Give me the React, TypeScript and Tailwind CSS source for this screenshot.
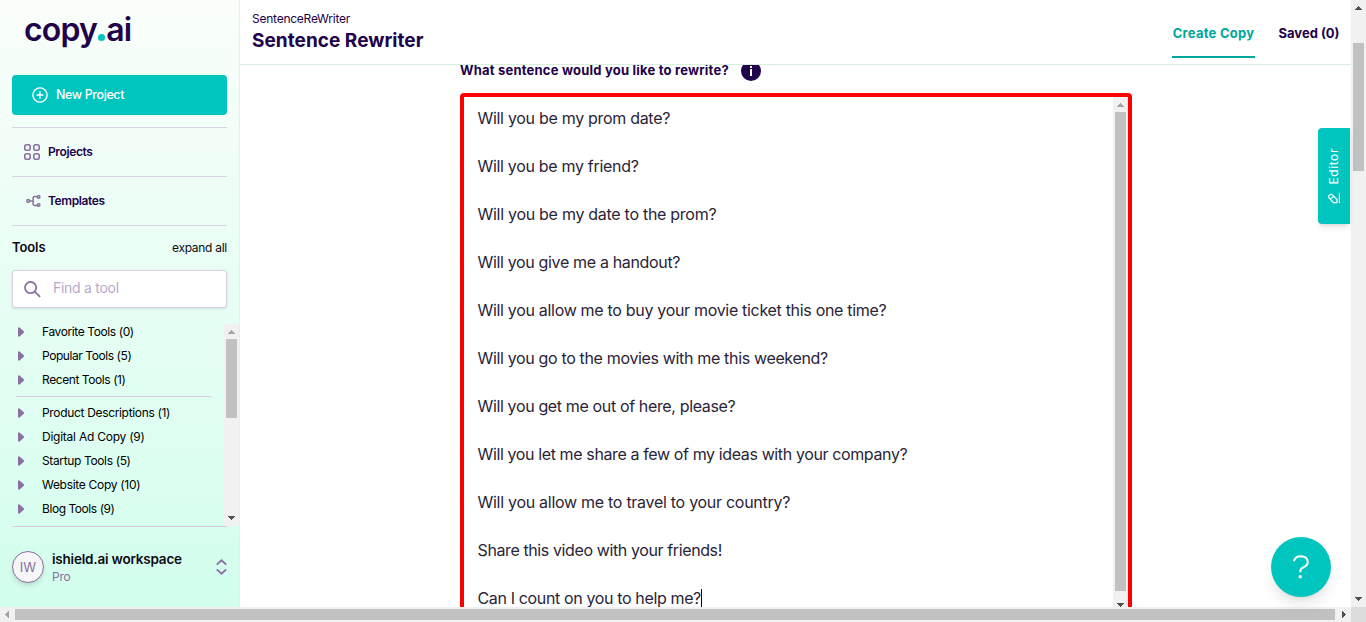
import React from "react";

const sentences: [string, string][] = [
  ["Will you be my prom date?", "tracking-[-0.3px]"],
  ["Will you be my friend?", "tracking-[-0.31px]"],
  ["Will you be my date to the prom?", "tracking-[-0.28px]"],
  ["Will you give me a handout?", "tracking-[-0.34px]"],
  ["Will you allow me to buy your movie ticket this one time?", "tracking-[-0.31px]"],
  ["Will you go to the movies with me this weekend?", "tracking-[-0.34px]"],
  ["Will you get me out of here, please?", "tracking-[-0.36px]"],
  ["Will you let me share a few of my ideas with your company?", "tracking-[-0.38px]"],
  ["Will you allow me to travel to your country?", "tracking-[-0.28px]"],
  ["Share this video with your friends!", "tracking-[-0.39px]"],
  ["Can I count on you to help me?", "tracking-[-0.36px]"],
];

const topTools: [string, string][] = [
  ["Favorite Tools (0)", "tracking-[-0.4px]"],
  ["Popular Tools (5)", "tracking-[-0.43px]"],
  ["Recent Tools (1)", "tracking-[-0.42px]"],
];

const allTools: [string, string][] = [
  ["Product Descriptions (1)", "tracking-[-0.33px]"],
  ["Digital Ad Copy (9)", "tracking-[-0.24px]"],
  ["Startup Tools (5)", "tracking-[-0.36px]"],
  ["Website Copy (10)", "tracking-[-0.3px]"],
  ["Blog Tools (9)", "tracking-[-0.44px]"],
];

function Arrow({ dir, color = "#505050" }: { dir: "up" | "down" | "left" | "right"; color?: string }) {
  const paths = {
    up: "M0 4h7L3.5 0z",
    down: "M0 0h7L3.5 4z",
    left: "M4 0v7L0 3.5z",
    right: "M0 0v7l4-3.5z",
  };
  const vertical = dir === "up" || dir === "down";
  return (
    <svg width={vertical ? 7 : 4} height={vertical ? 4 : 7} className="shrink-0" shapeRendering="crispEdges">
      <path d={paths[dir]} fill={color} />
    </svg>
  );
}

function ToolRow({ label, tracking }: { label: string; tracking: string }) {
  return (
    <li className="flex h-6 items-center pl-[6px]">
      <svg width="6" height="10" className="shrink-0">
        <path d="M0 .5h1.6L6 4.4v1.2L1.6 9.5H0z" fill="#8a6fa0" />
      </svg>
      <span className={"ml-[18px] whitespace-nowrap text-[12px] " + tracking}>{label}</span>
    </li>
  );
}

function Sidebar() {
  return (
    <aside className="flex w-60 shrink-0 flex-col border-r border-[#dff3ec] bg-linear-to-b from-[#fafefb] to-[#d2feed] pl-3">
      <div className="flex h-[75px] items-start pl-3 pt-[9px] text-[32px] font-semibold leading-[42px] tracking-[-0.8px] text-[#21024a]">
        <span>copy</span>
        <span className="ml-[1px] mr-[1px] mt-[25px] h-[7px] w-[7px] rounded-full bg-[#00c5bf]" />
        <span>ai</span>
      </div>
      <button className="flex h-10 w-[215px] items-center rounded bg-[#00c5bf] pl-5 text-[12.5px] font-medium text-white">
        <svg width="16" height="16" viewBox="0 0 16 16" fill="none" stroke="#fff" strokeWidth="1.4">
          <circle cx="8" cy="8" r="7.1" />
          <path d="M8 4.5v7M4.5 8h7" />
        </svg>
        <span className="ml-2 pt-px tracking-[-0.4px]">New Project</span>
      </button>
      <nav className="mt-3 w-[215px] border-t border-[#dcd2e6] text-[12px] font-semibold tracking-[-0.38px] text-[#21024a]">
        <a className="flex h-[49px] items-center border-b border-[#dcd2e6] pl-3">
          <svg width="16" height="16" viewBox="0 0 16 16" fill="none" stroke="#8a6fa0" strokeWidth="1.6">
            <rect x=".8" y=".8" width="5.4" height="5.4" rx="1.7" />
            <rect x="9.8" y=".8" width="5.4" height="5.4" rx="1.7" />
            <rect x=".8" y="9.8" width="5.4" height="5.4" rx="1.7" />
            <rect x="9.8" y="9.8" width="5.4" height="5.4" rx="1.7" />
          </svg>
          <span className="ml-2">Projects</span>
        </a>
        <a className="flex h-[49px] items-center border-b border-[#dcd2e6] pl-[14px]">
          <svg width="15" height="12" viewBox="0 0 15 12" fill="none" stroke="#8a6fa0" strokeWidth="1.5">
            <circle cx="2.2" cy="6" r="1.4" />
            <circle cx="12.6" cy="2" r="1.3" />
            <circle cx="12.6" cy="10" r="1.3" />
            <path d="M3.7 6H7M11.2 1.6H8.6Q7.1 1.6 7.1 3v6q0 1.4 1.5 1.4h2.6" />
          </svg>
          <span className="ml-[7px]">Templates</span>
        </a>
      </nav>
      <div className="flex h-11 w-[215px] items-center justify-between text-[#0c0a14]">
        <span className="text-[13px] font-semibold tracking-[-0.1px]">Tools</span>
        <span className="text-[12px] tracking-[-0.28px]">expand all</span>
      </div>
      <div className="flex h-[38px] w-[215px] shrink-0 items-center rounded-[3px] border border-[#dccfe8] bg-white pl-[11px] shadow-sm">
        <svg width="17" height="17" viewBox="0 0 17 17" fill="none" stroke="#8a6fa0" strokeWidth="1.8">
          <circle cx="6.6" cy="6.6" r="5.6" />
          <path d="M10.7 10.7l5.4 5.2" />
        </svg>
        <span className="ml-3 pb-[3px] text-[14px] tracking-[-0.28px] text-[#b9a9cb]">Find a tool</span>
      </div>
      <div className="mt-4 flex h-[202px] shrink-0">
        <div className="w-[212px] overflow-hidden text-black">
          <ul className="-mt-1">
            {topTools.map(([t, s]) => (
              <ToolRow key={t} label={t} tracking={s} />
            ))}
          </ul>
          <hr className="ml-1 mt-1 mb-1 w-[196px] border-[#dcc9e6]" />
          <ul>
            {allTools.map(([t, s]) => (
              <ToolRow key={t} label={t} tracking={s} />
            ))}
          </ul>
        </div>
        <div className="flex w-[15px] flex-col items-center bg-[#f1f1f1]">
          <div className="flex h-[15px] items-center">
            <Arrow dir="up" color="#a3a3a3" />
          </div>
          <div className="h-[79px] w-[11px] bg-[#c1c1c1]" />
          <div className="mt-auto h-[10px]">
            <Arrow dir="down" />
          </div>
        </div>
      </div>
      <div className="flex w-[215px] grow items-center border-t border-[#dcc9e6]">
        <div className="flex h-8 w-8 shrink-0 items-center justify-center rounded-full border border-[#8a6fa0] bg-[#f6f5f7] pt-px text-[13px] text-[#8a6fa0] shadow-md">
          IW
        </div>
        <div className="ml-2 pt-[1px]">
          <div className="whitespace-nowrap text-[13.5px] font-semibold leading-[18px] tracking-[-0.2px] text-[#0c0a14]">
            ishield.ai workspace
          </div>
          <div className="text-[12px] leading-[18px] tracking-[-0.2px] text-[#8a6fa0]">Pro</div>
        </div>
        <svg className="ml-auto" width="11" height="16" viewBox="0 0 11 16" fill="none" stroke="#8a6fa0" strokeWidth="1.9">
          <path d="M.8 5.6l4.700-4.300 4.700 4.300M.8 10.400l4.700 4.300 4.700-4.300" />
        </svg>
      </div>
    </aside>
  );
}

function EditorTab() {
  return (
    <button className="absolute right-px top-32 flex h-24 w-8 flex-col items-center justify-center rounded-l bg-[#00c5bf] text-white shadow-md">
      <span className="rotate-180 text-[12px] leading-4 tracking-[0.6px] [writing-mode:vertical-rl]">Editor</span>
      <svg className="mt-[9px]" width="12" height="11" viewBox="0 0 12 11" fill="none" stroke="#fff" strokeWidth="1.2">
        <path d="M11.4 .5v9.800M9 9.700H5.400L1 4.800Q.2 3.300 1.300 2.100Q2.700 .8 4.200 1.700L9 6.500V9.700M2.500 5.900L5.800 3.100" />
      </svg>
    </button>
  );
}

function Main() {
  return (
    <main className="relative flex min-w-0 grow flex-col bg-white">
      <header className="flex h-[65px] shrink-0 justify-between border-b border-[#d5eedd] pl-3 pr-3 text-[#21024a]">
        <div className="pt-[11px]">
          <div className="text-[12px] leading-4 tracking-[-0.24px]">SentenceReWriter</div>
          <h1 className="text-[19px] font-bold leading-[27px] tracking-[0.04px]">Sentence Rewriter</h1>
        </div>
        <div className="flex h-[58px] gap-6 text-[13px] font-bold">
          <span className="flex w-[83px] items-center justify-center whitespace-nowrap border-b-2 border-[#00a79d] pt-[12px] tracking-[0.25px] text-[#00a79d]">
            Create Copy
          </span>
          <span className="flex w-[60px] items-center justify-center whitespace-nowrap pt-[10px]">Saved (0)</span>
        </div>
      </header>
      <section className="min-h-0 grow overflow-hidden pl-[220px]">
        <div className="-mt-[5px] flex h-[22px] items-center text-[#21024a]">
          <h2 className="w-[269px] whitespace-nowrap text-[13px] font-bold tracking-[0.21px]">
            What sentence would you like to rewrite?
          </h2>
          <span className="ml-3 flex h-5 w-5 items-center justify-center rounded-full bg-[#21024a]">
            <svg width="2" height="10" viewBox="0 0 2 10" fill="#fff">
              <path d="M0 0h2v2H0zM0 3h2v7H0z" />
            </svg>
          </span>
        </div>
        <div className="mt-[11px] flex h-[540px] w-[672px] rounded border-4 border-[#ff0000] bg-white">
          <div className="grow pl-[13.5px] pt-[9px] text-[16px] leading-6 text-[#2a2438]">
            {sentences.map(([s, t], i) => (
              <p key={s} className={"mb-6 flex items-center whitespace-nowrap " + t}>
                {s}
                {i === sentences.length - 1 && <span className="h-[18px] w-px bg-black" />}
              </p>
            ))}
          </div>
          <div className="flex h-[510px] w-[15px] flex-col items-center bg-[#f1f1f1]">
            <div className="flex h-[15px] shrink-0 items-center">
              <Arrow dir="up" color="#a3a3a3" />
            </div>
            <div className="h-[479px] w-[11px] shrink-0 bg-[#c1c1c1]" />
            <div className="mt-3">
              <Arrow dir="down" />
            </div>
          </div>
        </div>
      </section>
      <EditorTab />
      <button className="absolute bottom-[10px] right-5 flex h-[60px] w-[60px] items-center justify-center rounded-full bg-[#00c5bf] shadow-lg">
        <svg width="18" height="24" viewBox="0 0 18 24" fill="none" stroke="#fff" strokeWidth="2">
          <path d="M1.900 6.300Q3.200 1.200 8.500 1.200Q15.600 1.400 15.800 7Q15.700 10.500 11.600 12.200Q8.200 13.500 8.200 17.300" />
          <circle cx="8.200" cy="21.700" r="1.700" fill="#fff" stroke="none" />
        </svg>
      </button>
    </main>
  );
}

export default function App() {
  return (
    <div className="flex h-[622px] w-[1366px] flex-col overflow-hidden font-[Inter,sans-serif]">
      <div className="flex h-[607px]">
        <Sidebar />
        <Main />
        <div className="flex w-[15px] shrink-0 flex-col items-center bg-[#f1f1f1]">
          <div className="h-[43px] pt-[6px]">
            <Arrow dir="up" />
          </div>
          <div className="h-32 w-[11px] bg-[#c1c1c1]" />
          <div className="mt-auto h-[10px]">
            <Arrow dir="down" />
          </div>
        </div>
      </div>
      <div className="flex h-[15px] items-center bg-[#f1f1f1]">
        <div className="w-[15px] pl-[5px]">
          <Arrow dir="left" color="#a3a3a3" />
        </div>
        <div className="h-[11px] w-[1320px] bg-[#c1c1c1]" />
        <div className="w-4 pl-[7px]">
          <Arrow dir="right" />
        </div>
        <div className="h-full w-[15px] bg-[#dcdcdc]" />
      </div>
    </div>
  );
}
